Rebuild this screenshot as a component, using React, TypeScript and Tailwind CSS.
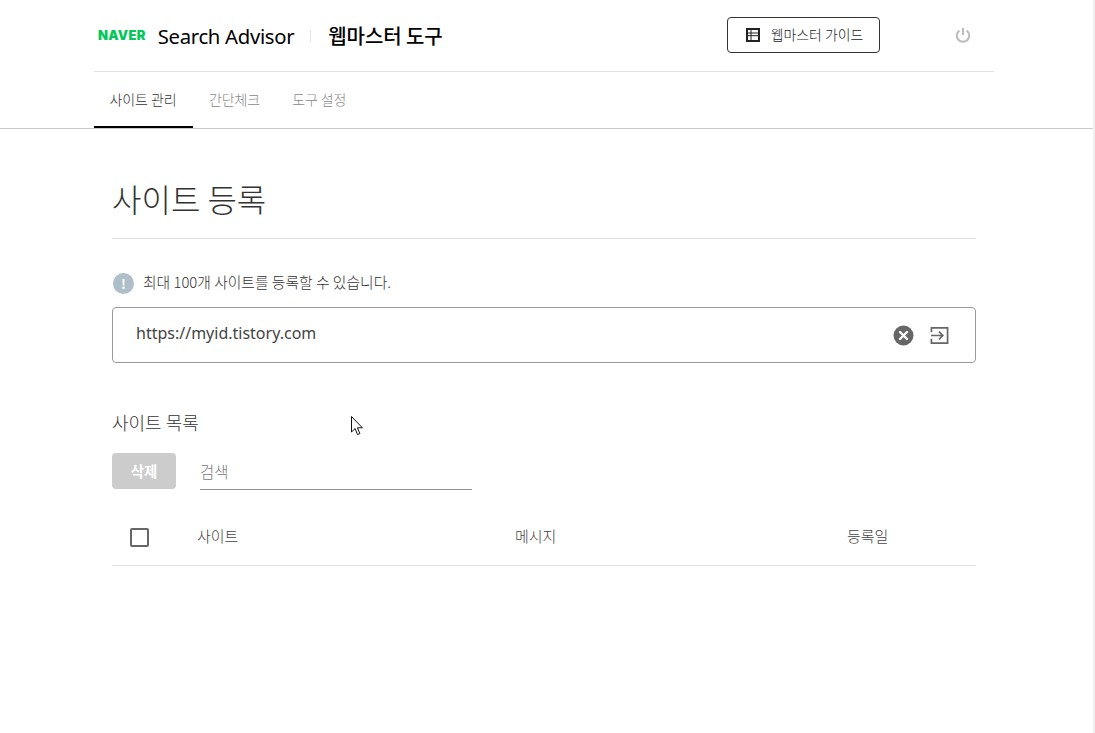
const KR = "font-['Noto_Sans_CJK_KR','Noto_Sans',sans-serif]"

const tabs = [
  { label: "사이트 관리", active: true },
  { label: "간단체크", active: false },
  { label: "도구 설정", active: false },
]

function Header() {
  return (
    <div className="ml-[94px] w-[900px]">
      <div className="flex h-[72px] items-center border-b border-[#e2e2e2] pl-1">
        <span className="font-['Inter',sans-serif] text-[13px] font-black tracking-[0.3px] text-[#03c75a]">NAVER</span>
        <span className="ml-[12px] pt-[2px] font-['Noto_Sans',sans-serif] text-[20.3px] tracking-[-0.3px] text-black">Search Advisor</span>
        <span className="ml-[16px] h-3 w-px bg-[#e2e2e2]" />
        <span className="ml-[17px] text-[20px] font-medium tracking-[-0.1px] text-black">웹마스터 도구</span>
        <button className="mb-[2px] ml-auto flex h-9 w-[153px] items-center justify-center gap-[11px] rounded-[4px] border border-[#333] bg-white pl-[2px] text-[13.9px] font-light text-[#222]">
          <svg width="14" height="14" viewBox="0 0 14 14">
            <rect x="0" y="0" width="14" height="14" fill="#222" />
            <rect x="2" y="2" width="10" height="10" fill="#fff" />
            <path d="M2 5h10M2 7.7h10M5 2v10" stroke="#222" strokeWidth="1" fill="none" />
          </svg>
          웹마스터 가이드
        </button>
        <svg className="ml-[75px] mr-[23px]" width="16" height="17" viewBox="0 0 16 17" fill="none" stroke="#bdbdbd" strokeWidth="2">
          <path d="M8 1v7" />
          <path d="M4.4 3.6a6.2 6.2 0 1 0 7.2 0" />
        </svg>
      </div>
      <nav className="flex h-[56px]">
        {tabs.map((t) => (
          <a
            key={t.label}
            className={
              t.active
                ? "flex h-[56px] w-[99px] items-center justify-center border-b-2 border-black pr-[1px] text-[14px] font-light tracking-[-0.1px] text-[#333]"
                : "flex h-[56px] items-center px-[16px] pb-[2px] text-[14px] font-light tracking-[-0.1px] text-[#888]"
            }
          >
            {t.label}
          </a>
        ))}
      </nav>
    </div>
  )
}

function Cursor() {
  return (
    <svg className="absolute left-[351px] top-[416px]" width="13" height="20" viewBox="0 0 13 20">
      <path d="M0.5 0.5V16l3.6-3.4 2.4 6 2.4-1-2.5-5.8h5z" fill="#fff" stroke="#111" strokeWidth="1" />
    </svg>
  )
}

export default function App() {
  return (
    <div className={`relative flex h-[733px] overflow-hidden bg-white ${KR}`}>
      <div className="h-full w-[1093px]">
        <div className="border-b border-[#c8c8c8]">
          <Header />
        </div>

        <main className="ml-[112px] w-[864px]">
          <h1 className="flex h-[110px] items-center border-b border-[#e2e2e2] pt-[28px] text-[32px] font-light text-[#333]">
            사이트 등록
          </h1>

          <div className="mt-[32px] flex items-center gap-[9px] pl-[1px]">
            <span className="flex h-[21px] w-[21px] items-center justify-center rounded-full bg-[#aebfca] text-[13px] font-bold leading-none text-white">!</span>
            <p className="pb-[2px] text-[14.8px] font-light text-[#333]">최대 100개 사이트를 등록할 수 있습니다.</p>
          </div>

          <div className="mt-[12px] flex h-[56px] items-center rounded-[4px] border border-[#999] pl-[23px] pr-[26px]">
            <span className="pb-[4px] font-['Noto_Sans',sans-serif] text-[16px] text-[#444]">https://myid.tistory.com</span>
            <svg className="ml-auto" width="21" height="21" viewBox="0 0 21 21">
              <circle cx="10.5" cy="10.5" r="10" fill="#666" />
              <path d="M7 7l7 7M14 7l-7 7" stroke="#fff" strokeWidth="2.4" strokeLinecap="round" />
            </svg>
            <svg className="ml-[16px]" width="19" height="19" viewBox="0 0 20 19" fill="none" stroke="#666" strokeWidth="1.8">
              <path d="M1.5 6V1.5h17v16h-17V13" />
              <path d="M1 9.5h12M9.5 5.5l4 4-4 4" />
            </svg>
          </div>

          <h2 className="mt-[47px] text-[18px] font-light leading-[24px] text-[#333]">사이트 목록</h2>

          <div className="mt-[19px] flex items-start gap-[24px]">
            <button className="h-[36px] w-[64px] rounded-[4px] bg-[#cccccc] text-[14.5px] font-bold text-white">삭제</button>
            <div className="flex h-[37px] w-[272px] items-center border-b border-[#909090] text-[15.5px] font-light text-[#777]">검색</div>
          </div>

          <div className="mt-[17px] grid h-[59px] grid-cols-[85px_318px_332px_1fr] items-center border-b border-[#e2e2e2] text-[15px] font-light text-[#444]">
            <span className="ml-[18px] mt-[2px] h-[19px] w-[19px] rounded-[2px] border-2 border-[#666]" />
            <span>사이트</span>
            <span>메시지</span>
            <span>등록일</span>
          </div>
        </main>
      </div>
      <div className="h-full w-[2px] bg-[#f1f1f1]" />
      <Cursor />
    </div>
  )
}
